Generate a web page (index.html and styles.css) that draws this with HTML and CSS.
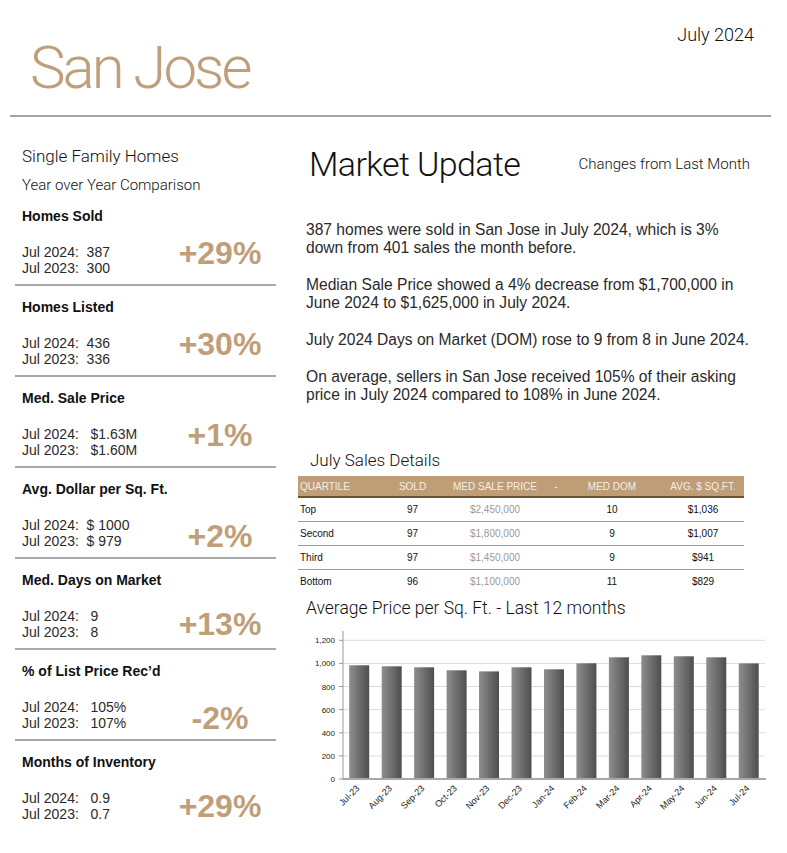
FILE: index.html
```html
<!DOCTYPE html>
<html lang="en">
<head>
<meta charset="utf-8">
<title>San Jose Market Update - July 2024</title>
<link rel="stylesheet" href="styles.css">
</head>
<body>
<div class="page">
  <header class="header">
    <h1 class="city">San Jose</h1>
    <div class="date">July 2024</div>
  </header>

  <main class="main">
    <section class="left">
      <div class="seg-title">Single Family Homes</div>
      <div class="seg-sub">Year over Year Comparison</div>

      <div class="stat">
        <div class="stat-title">Homes Sold</div>
        <div class="stat-body">
          <div class="stat-vals"><div>Jul 2024:&nbsp; 387</div><div>Jul 2023:&nbsp; 300</div></div>
          <div class="stat-pct hi">+29%</div>
        </div>
      </div>
      <div class="stat">
        <div class="stat-title">Homes Listed</div>
        <div class="stat-body">
          <div class="stat-vals"><div>Jul 2024:&nbsp; 436</div><div>Jul 2023:&nbsp; 336</div></div>
          <div class="stat-pct hi">+30%</div>
        </div>
      </div>
      <div class="stat">
        <div class="stat-title">Med. Sale Price</div>
        <div class="stat-body">
          <div class="stat-vals"><div>Jul 2024:&nbsp;&nbsp; $1.63M</div><div>Jul 2023:&nbsp;&nbsp; $1.60M</div></div>
          <div class="stat-pct hi">+1%</div>
        </div>
      </div>
      <div class="stat">
        <div class="stat-title">Avg. Dollar per Sq. Ft.</div>
        <div class="stat-body">
          <div class="stat-vals"><div>Jul 2024:&nbsp; $ 1000</div><div>Jul 2023:&nbsp; $ 979</div></div>
          <div class="stat-pct lo">+2%</div>
        </div>
      </div>
      <div class="stat">
        <div class="stat-title">Med. Days on Market</div>
        <div class="stat-body">
          <div class="stat-vals"><div>Jul 2024:&nbsp;&nbsp; 9</div><div>Jul 2023:&nbsp;&nbsp; 8</div></div>
          <div class="stat-pct">+13%</div>
        </div>
      </div>
      <div class="stat">
        <div class="stat-title">% of List Price Rec’d</div>
        <div class="stat-body">
          <div class="stat-vals"><div>Jul 2024:&nbsp;&nbsp; 105%</div><div>Jul 2023:&nbsp;&nbsp; 107%</div></div>
          <div class="stat-pct lo">-2%</div>
        </div>
      </div>
      <div class="stat">
        <div class="stat-title">Months of Inventory</div>
        <div class="stat-body">
          <div class="stat-vals"><div>Jul 2024:&nbsp;&nbsp; 0.9</div><div>Jul 2023:&nbsp;&nbsp; 0.7</div></div>
          <div class="stat-pct">+29%</div>
        </div>
      </div>
    </section>

    <section class="right">
      <div class="mu-head">
        <h2 class="mu-title">Market Update</h2>
        <div class="mu-sub">Changes from Last Month</div>
      </div>

      <div class="summary">
        <p>387 homes were sold in San Jose in July 2024, which is 3% down from 401 sales the month before.</p>
        <p>Median Sale Price showed a 4% decrease from $1,700,000 in June 2024 to $1,625,000 in July 2024.</p>
        <p>July 2024 Days on Market (DOM) rose to 9 from 8 in June 2024.</p>
        <p>On average, sellers in San Jose received 105% of their asking price in July 2024 compared to 108% in June 2024.</p>
      </div>

      <h3 class="sec-title sales-title">July Sales Details</h3>
      <table class="sales">
        <thead>
          <tr>
            <th class="c-q">QUARTILE</th>
            <th class="c-s">SOLD</th>
            <th class="c-p">MED SALE PRICE</th>
            <th class="c-d">-</th>
            <th class="c-m">MED DOM</th>
            <th class="c-a">AVG. $ SQ.FT.</th>
          </tr>
        </thead>
        <tbody>
          <tr><td class="c-q">Top</td><td class="c-s">97</td><td class="c-p">$2,450,000</td><td class="c-d"></td><td class="c-m">10</td><td class="c-a">$1,036</td></tr>
          <tr><td class="c-q">Second</td><td class="c-s">97</td><td class="c-p">$1,800,000</td><td class="c-d"></td><td class="c-m">9</td><td class="c-a">$1,007</td></tr>
          <tr><td class="c-q">Third</td><td class="c-s">97</td><td class="c-p">$1,450,000</td><td class="c-d"></td><td class="c-m">9</td><td class="c-a">$941</td></tr>
          <tr><td class="c-q">Bottom</td><td class="c-s">96</td><td class="c-p">$1,100,000</td><td class="c-d"></td><td class="c-m">11</td><td class="c-a">$829</td></tr>
        </tbody>
      </table>

      <h3 class="sec-title chart-title">Average Price per Sq. Ft. - Last 12 months</h3>
      <svg class="chart" width="473" height="200" viewBox="0 0 473 200" xmlns="http://www.w3.org/2000/svg">
        <defs>
          <linearGradient id="barg" x1="0" y1="0" x2="1" y2="0">
            <stop offset="0" stop-color="#8e8e8e"/>
            <stop offset="1" stop-color="#4e4e4e"/>
          </linearGradient>
        </defs>
        <g class="grid">
          <line x1="45" y1="15.3" x2="467" y2="15.3"/>
          <line x1="45" y1="38.4" x2="467" y2="38.4"/>
          <line x1="45" y1="61.5" x2="467" y2="61.5"/>
          <line x1="45" y1="84.6" x2="467" y2="84.6"/>
          <line x1="45" y1="107.8" x2="467" y2="107.8"/>
          <line x1="45" y1="130.9" x2="467" y2="130.9"/>
        </g>
        <g class="ticks">
          <line x1="41" y1="15.3" x2="45" y2="15.3"/>
          <line x1="41" y1="38.4" x2="45" y2="38.4"/>
          <line x1="41" y1="61.5" x2="45" y2="61.5"/>
          <line x1="41" y1="84.6" x2="45" y2="84.6"/>
          <line x1="41" y1="107.8" x2="45" y2="107.8"/>
          <line x1="41" y1="130.9" x2="45" y2="130.9"/>
          <line x1="41" y1="154" x2="45" y2="154"/>
        </g>
        <g class="ylab">
          <text x="37" y="18.3">1,200</text>
          <text x="37" y="41.4">1,000</text>
          <text x="37" y="64.5">800</text>
          <text x="37" y="87.6">600</text>
          <text x="37" y="110.8">400</text>
          <text x="37" y="133.9">200</text>
          <text x="37" y="157">0</text>
        </g>
        <g class="bars">
          <rect x="51.2" y="40.3" width="20" height="113.7"/>
          <rect x="83.7" y="41.3" width="20" height="112.7"/>
          <rect x="116.1" y="42.3" width="20" height="111.7"/>
          <rect x="148.6" y="45.3" width="20" height="108.7"/>
          <rect x="181.0" y="46.4" width="20" height="107.6"/>
          <rect x="213.5" y="42.3" width="20" height="111.7"/>
          <rect x="246.0" y="44.3" width="20" height="109.7"/>
          <rect x="278.4" y="38.3" width="20" height="115.7"/>
          <rect x="310.9" y="32.3" width="20" height="121.7"/>
          <rect x="343.3" y="30.3" width="20" height="123.7"/>
          <rect x="375.8" y="31.3" width="20" height="122.7"/>
          <rect x="408.3" y="32.3" width="20" height="121.7"/>
          <rect x="440.7" y="38.4" width="20" height="115.6"/>
        </g>
        <line class="yaxis" x1="45" y1="6" x2="45" y2="154"/>
        <line class="xaxis" x1="44" y1="154" x2="468" y2="154"/>
        <g class="xlab">
          <text x="62" y="164" transform="rotate(-45 62 164)">Jul-23</text>
          <text x="94.5" y="164" transform="rotate(-45 94.5 164)">Aug-23</text>
          <text x="127" y="164" transform="rotate(-45 127 164)">Sep-23</text>
          <text x="159.5" y="164" transform="rotate(-45 159.5 164)">Oct-23</text>
          <text x="192" y="164" transform="rotate(-45 192 164)">Nov-23</text>
          <text x="224.5" y="164" transform="rotate(-45 224.5 164)">Dec-23</text>
          <text x="257" y="164" transform="rotate(-45 257 164)">Jan-24</text>
          <text x="289.5" y="164" transform="rotate(-45 289.5 164)">Feb-24</text>
          <text x="322" y="164" transform="rotate(-45 322 164)">Mar-24</text>
          <text x="354.5" y="164" transform="rotate(-45 354.5 164)">Apr-24</text>
          <text x="387" y="164" transform="rotate(-45 387 164)">May-24</text>
          <text x="419.5" y="164" transform="rotate(-45 419.5 164)">Jun-24</text>
          <text x="452" y="164" transform="rotate(-45 452 164)">Jul-24</text>
        </g>
      </svg>
    </section>
  </main>
</div>
</body>
</html>
```

FILE: styles.css
```css
* { box-sizing: border-box; }

html, body {
  margin: 0;
  padding: 0;
  background: #ffffff;
}

body {
  font-family: "Liberation Sans", Arial, sans-serif;
  color: #222222;
  width: 787px;
}

.page {
  width: 787px;
  height: 853px;
  overflow: hidden;
}

/* ---------- header ---------- */
.header {
  margin: 0 16px 0 10px;
  height: 117px;
  border-bottom: 2px solid #a4a4a4;
  display: flex;
  justify-content: space-between;
  align-items: flex-start;
}

.city {
  margin: 38px 0 0 20px;
  font-family: Roboto, "Liberation Sans", sans-serif;
  font-weight: 300;
  font-size: 60px;
  line-height: 60px;
  letter-spacing: -3px;
  color: #bf9f7a;
}

.date {
  margin: 24px 17px 0 0;
  font-family: Roboto, "Liberation Sans", sans-serif;
  font-weight: 300;
  font-size: 18px;
  line-height: 22px;
  color: #111111;
}

/* ---------- main grid ---------- */
.main {
  display: grid;
  grid-template-columns: 261px 473px;
  column-gap: 22px;
  margin-left: 15px;
}

/* ---------- left column ---------- */
.left {
  display: flex;
  flex-direction: column;
}

.seg-title {
  margin-top: 28px;
  padding-left: 7px;
  font-family: Roboto, "Liberation Sans", sans-serif;
  font-weight: 300;
  font-size: 17px;
  line-height: 22px;
  color: #111111;
}

.seg-sub {
  margin-top: 8px;
  padding-left: 7px;
  font-family: Roboto, "Liberation Sans", sans-serif;
  font-weight: 300;
  font-size: 15px;
  line-height: 20px;
  color: #111111;
}

.stat {
  height: 91px;
  padding: 12px 0 0 7px;
  border-bottom: 2px solid #a8a8a8;
}

.stat:last-child {
  border-bottom: none;
}

.stat-title {
  font-weight: bold;
  font-size: 14px;
  line-height: 18px;
  color: #111111;
}

.stat-body {
  display: flex;
  align-items: flex-start;
  margin-top: 19px;
}

.stat-vals {
  width: 148px;
  font-size: 14px;
  line-height: 16px;
  color: #2a2a2a;
}

.stat-pct {
  width: 100px;
  text-align: center;
  font-weight: bold;
  font-size: 32px;
  line-height: 34px;
  color: #bf9f7a;
  margin-top: -1px;
}

.stat-pct.hi {
  margin-top: -8px;
}

.stat-pct.lo {
  margin-top: 2px;
}

/* ---------- right column ---------- */
.right {
  display: flex;
  flex-direction: column;
}

.mu-head {
  margin-top: 27px;
  padding: 0 21px 0 11px;
  display: flex;
  justify-content: space-between;
  align-items: center;
}

.mu-title {
  margin: 0;
  font-family: Roboto, "Liberation Sans", sans-serif;
  font-weight: 300;
  font-size: 34px;
  line-height: 40px;
  letter-spacing: -0.6px;
  color: #111111;
}

.mu-sub {
  font-family: Roboto, "Liberation Sans", sans-serif;
  font-weight: 300;
  font-size: 15px;
  line-height: 20px;
  color: #111111;
}

.summary {
  margin-top: 37px;
  padding-left: 8px;
  width: 460px;
}

.summary p {
  margin: 0 0 19px 0;
  font-size: 15.6px;
  line-height: 18px;
  color: #2a2a2a;
}

.summary p:last-child {
  margin-bottom: 0;
}

.sec-title {
  margin: 0;
  font-family: Roboto, "Liberation Sans", sans-serif;
  font-weight: 300;
  color: #111111;
}

.sales-title {
  margin-top: 45px;
  padding-left: 12px;
  font-size: 17px;
  line-height: 22px;
}

/* ---------- table ---------- */
.sales {
  margin-top: 5px;
  width: 446px;
  border-collapse: collapse;
  table-layout: fixed;
  font-size: 10px;
}

.sales th {
  height: 21px;
  padding: 0;
  background: #be9d77;
  color: #f6efe6;
  font-weight: normal;
  border-bottom: 2px solid #6e5434;
}

.sales td {
  height: 24px;
  padding: 0;
  color: #111111;
  border-bottom: 1px solid #9a9a9a;
}

.sales tbody tr:last-child td {
  border-bottom: none;
}

.sales .c-q { width: 87px; text-align: left; padding-left: 2px; }
.sales .c-s { width: 55px; text-align: center; }
.sales .c-p { width: 110px; text-align: center; }
.sales .c-d { width: 12px; text-align: center; }
.sales .c-m { width: 100px; text-align: center; }
.sales .c-a { width: 82px; text-align: center; }

.sales td.c-p { color: #9a9a9a; }

/* ---------- chart ---------- */
.chart-title {
  margin-top: 4px;
  padding-left: 8px;
  font-size: 17.5px;
  line-height: 22px;
}

.chart {
  display: block;
  margin-top: 6px;
}

.chart .grid line {
  stroke: #dcdcdc;
  stroke-width: 1;
}

.chart .ticks line {
  stroke: #9a9a9a;
  stroke-width: 1;
}

.chart .bars rect {
  fill: url(#barg);
}

.chart .yaxis {
  stroke: #9a9a9a;
  stroke-width: 1;
}

.chart .xaxis {
  stroke: #a8a8a8;
  stroke-width: 2;
}

.chart text {
  font-family: "Liberation Sans", Arial, sans-serif;
  font-size: 8px;
  fill: #222222;
}

.chart .ylab text {
  text-anchor: end;
}

.chart .xlab text {
  text-anchor: end;
  font-size: 9px;
}
```
